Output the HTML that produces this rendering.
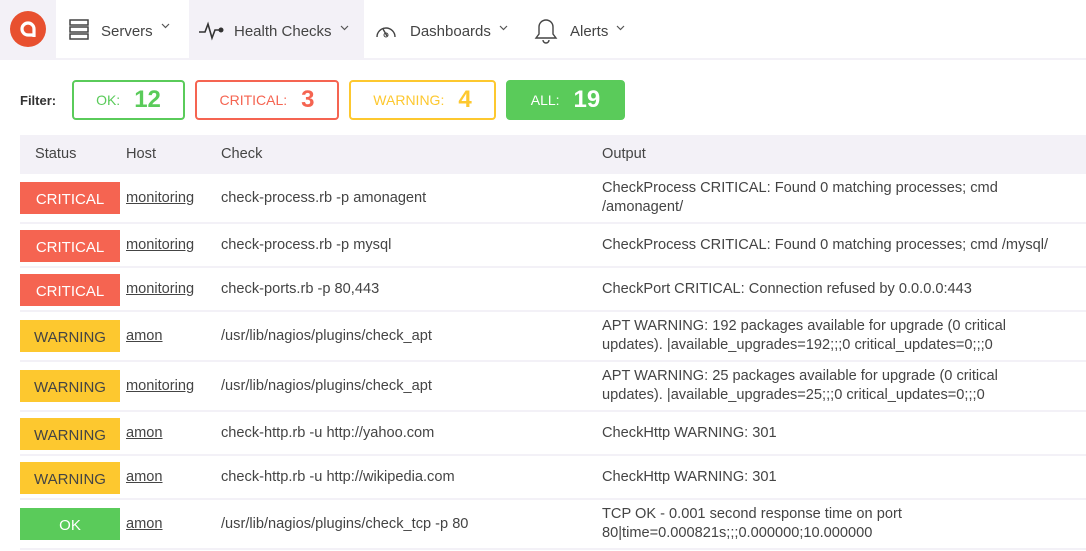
<!DOCTYPE html>
<html><head><style>
*{margin:0;padding:0;box-sizing:border-box}
body{width:1086px;height:551px;overflow:hidden;background:#fff;font-family:"Liberation Sans",sans-serif;color:#444;position:relative;font-size:14px}
.nav{position:absolute;top:0;left:0;width:1086px;height:60px;border-bottom:2px solid #f3f1f7}
.ni{position:absolute;top:0;height:58px;display:flex;align-items:center;font-size:15px;color:#444;padding-top:4px}
.car{margin-left:8px;display:inline-block;margin-top:-6px}
.fl{position:absolute;top:80px;height:40px;border:2px solid;border-radius:4px;display:flex;align-items:center;justify-content:center;font-size:14px}
.fl b{font-size:24px;margin-left:14px}
.row{position:absolute;left:20px;width:1066px;border-bottom:2px solid #f3f1f7}
.c{position:absolute;top:0;height:100%;display:flex;align-items:center;font-size:14.6px;color:#444;line-height:19px}
.bd{position:absolute;left:0;width:100px;height:32px;color:#fff;font-size:15px;display:flex;align-items:center;justify-content:center;padding-top:2px}
.cr{background:#f56451}.wa{background:#fdc82f;color:#444}.ok{background:#5acb5a}
a{color:#444;text-decoration:underline}
</style></head><body>
<div class="nav">
<div class="ni" style="left:0;width:56px;background:#f3f1f7;justify-content:center;padding-top:0"><svg width="38" height="38" viewBox="0 0 38 38"><circle cx="19" cy="19" r="18" fill="#e8502f"/><path d="M25 27V19a6 6 0 1 0-6 6h6" fill="none" stroke="#fff" stroke-width="3.2"/></svg></div>
<div class="ni" style="left:56px;width:133px;padding-left:12px;padding-top:0"><svg width="22" height="22" viewBox="0 0 22 22"><g fill="none" stroke="#444" stroke-width="1.5"><rect x="2" y="2" width="18" height="5"/><rect x="2" y="9" width="18" height="5"/><rect x="2" y="16" width="18" height="5"/></g></svg><span style="margin-left:11px;margin-top:4px">Servers</span><svg class="car" width="9" height="6" viewBox="0 0 9 6"><path d="M1 1l3.5 3.5L8 1" fill="none" stroke="#555" stroke-width="1.2"/></svg></div>
<div class="ni" style="left:189px;width:175px;background:#f3f1f7;padding-left:10px"><svg width="26" height="22" viewBox="0 0 26 22"><path d="M0 12h6l3-8 4 14 3-8h5" fill="none" stroke="#333" stroke-width="1.6"/><circle cx="22" cy="10" r="2.5" fill="#333"/></svg><span style="margin-left:9px">Health Checks</span><svg class="car" width="9" height="6" viewBox="0 0 9 6"><path d="M1 1l3.5 3.5L8 1" fill="none" stroke="#555" stroke-width="1.2"/></svg></div>
<div class="ni" style="left:364px;width:160px;padding-left:10px"><svg width="24" height="20" viewBox="0 0 24 20"><path d="M3 16A9 9 0 1 1 21 16" fill="none" stroke="#444" stroke-width="1.4"/><path d="M9 8l4 7" stroke="#444" stroke-width="1.4"/><circle cx="12" cy="14" r="2" fill="none" stroke="#444"/></svg><span style="margin-left:12px">Dashboards</span><svg class="car" width="9" height="6" viewBox="0 0 9 6"><path d="M1 1l3.5 3.5L8 1" fill="none" stroke="#555" stroke-width="1.2"/></svg></div>
<div class="ni" style="left:524px;width:120px;padding-left:10px"><svg width="24" height="28" viewBox="0 0 24 28"><path d="M12 3a7 7 0 0 0-7 7v7l-3 4h20l-3-4v-7a7 7 0 0 0-7-7z M9 23a3 3 0 0 0 6 0" fill="none" stroke="#444" stroke-width="1.4"/></svg><span style="margin-left:12px">Alerts</span><svg class="car" width="9" height="6" viewBox="0 0 9 6"><path d="M1 1l3.5 3.5L8 1" fill="none" stroke="#555" stroke-width="1.2"/></svg></div>
</div>
<div style="position:absolute;left:20px;top:93px;font-size:13px;font-weight:bold;color:#333">Filter:</div>
<div class="fl" style="left:72px;width:113px;border-color:#5acb5a;color:#5acb5a">OK:<b>12</b></div>
<div class="fl" style="left:195px;width:144px;border-color:#f56451;color:#f56451">CRITICAL:<b>3</b></div>
<div class="fl" style="left:349px;width:147px;border-color:#fdc82f;color:#fdc82f">WARNING:<b>4</b></div>
<div class="fl" style="left:506px;width:119px;border-color:#5acb5a;background:#5acb5a;color:#fff">ALL:<b>19</b></div>

<div class="row" style="top:135px;height:39px;background:#f3f1f7;border:none"><div class="c" style="left:15px">Status</div><div class="c" style="left:106px">Host</div><div class="c" style="left:201px">Check</div><div class="c" style="left:582px">Output</div></div>

<div class="row" style="top:174px;height:50px"><div class="bd cr" style="top:8px">CRITICAL</div><div class="c" style="left:106px"><a>monitoring</a></div><div class="c" style="left:201px">check-process.rb -p amonagent</div><div class="c" style="left:582px;width:405px">CheckProcess CRITICAL: Found 0 matching processes; cmd /amonagent/</div></div>
<div class="row" style="top:224px;height:44px"><div class="bd cr" style="top:6px">CRITICAL</div><div class="c" style="left:106px"><a>monitoring</a></div><div class="c" style="left:201px">check-process.rb -p mysql</div><div class="c" style="left:582px;width:470px">CheckProcess CRITICAL: Found 0 matching processes; cmd /mysql/</div></div>
<div class="row" style="top:268px;height:44px"><div class="bd cr" style="top:6px">CRITICAL</div><div class="c" style="left:106px"><a>monitoring</a></div><div class="c" style="left:201px">check-ports.rb -p 80,443</div><div class="c" style="left:582px">CheckPort CRITICAL: Connection refused by 0.0.0.0:443</div></div>
<div class="row" style="top:312px;height:50px"><div class="bd wa" style="top:8px">WARNING</div><div class="c" style="left:106px"><a>amon</a></div><div class="c" style="left:201px">/usr/lib/nagios/plugins/check_apt</div><div class="c" style="left:582px;width:430px">APT WARNING: 192 packages available for upgrade (0 critical updates). |available_upgrades=192;;;0 critical_updates=0;;;0</div></div>
<div class="row" style="top:362px;height:50px"><div class="bd wa" style="top:8px">WARNING</div><div class="c" style="left:106px"><a>monitoring</a></div><div class="c" style="left:201px">/usr/lib/nagios/plugins/check_apt</div><div class="c" style="left:582px;width:430px">APT WARNING: 25 packages available for upgrade (0 critical updates). |available_upgrades=25;;;0 critical_updates=0;;;0</div></div>
<div class="row" style="top:412px;height:44px"><div class="bd wa" style="top:6px">WARNING</div><div class="c" style="left:106px"><a>amon</a></div><div class="c" style="left:201px">check-http.rb -u http://yahoo.com</div><div class="c" style="left:582px">CheckHttp WARNING: 301</div></div>
<div class="row" style="top:456px;height:44px"><div class="bd wa" style="top:6px">WARNING</div><div class="c" style="left:106px"><a>amon</a></div><div class="c" style="left:201px">check-http.rb -u http://wikipedia.com</div><div class="c" style="left:582px">CheckHttp WARNING: 301</div></div>
<div class="row" style="top:500px;height:50px"><div class="bd ok" style="top:8px">OK</div><div class="c" style="left:106px"><a>amon</a></div><div class="c" style="left:201px">/usr/lib/nagios/plugins/check_tcp -p 80</div><div class="c" style="left:582px;width:340px">TCP OK - 0.001 second response time on port 80|time=0.000821s;;;0.000000;10.000000</div></div>
</body></html>
